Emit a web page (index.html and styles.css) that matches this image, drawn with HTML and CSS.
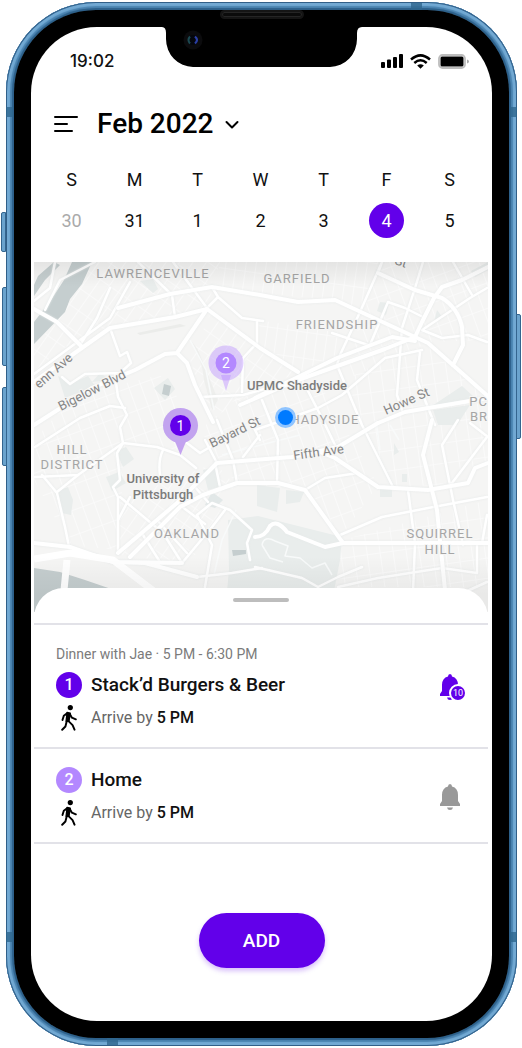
FILE: index.html
```html
<!DOCTYPE html>
<html lang="en">
<head>
<meta charset="utf-8">
<meta name="viewport" content="width=device-width, initial-scale=1">
<title>Feb 2022</title>
<link rel="stylesheet" href="styles.css">
</head>
<body>
<div class="phone">
  <span class="key key-mute"></span>
  <span class="key key-up"></span>
  <span class="key key-down"></span>
  <span class="key key-power"></span>
  <span class="seam seam-top"></span>
  <span class="seam seam-bottom"></span>
  <span class="seam seam-side seam-high"></span>
  <span class="seam seam-side seam-low"></span>
  <div class="bezel">
    <span class="speaker"></span>
    <main class="screen">
      <svg class="notch" viewBox="0 0 200 40" aria-hidden="true">
        <path d="M0 0Q4 0 4 6V12A27 28 0 0 0 31 40H168A27 28 0 0 0 195 12V6Q195 0 200 0Z" fill="#000"/>
        <circle cx="31" cy="13" r="9.500" fill="#0b0b0d"/>
        <circle cx="31" cy="13" r="5" fill="#04060c"/>
        <path d="M28 9.500q-3 3.500 0 7" stroke="#1c4a52" stroke-width="2" fill="none"/>
        <path d="M33 9.500q4 3.500 0 7" stroke="#2b3fa5" stroke-width="2.200" fill="none"/>
      </svg>
      <div class="status">
        <time class="clock">19:02</time>
        <div class="indicators">
          <svg width="22" height="14" viewBox="0 0 22 14" aria-hidden="true">
            <rect x="0" y="8" width="4" height="6" rx="1"/><rect x="6" y="5.500" width="4" height="8.500" rx="1"/><rect x="12" y="3" width="4" height="11" rx="1"/><rect x="18" y="0" width="4" height="14" rx="1"/>
          </svg>
          <svg width="21" height="15" viewBox="0 0 21 15" fill="none" stroke="#000" stroke-width="2.500" aria-hidden="true">
            <path d="M1 5.500Q10.500-2.800 20 5.500M4.300 9Q10.500 3.600 16.700 9"/><path d="M10.500 14.800L7.200 11.500Q10.500 8.800 13.800 11.500Z" fill="#000" stroke="none"/>
          </svg>
          <svg width="31" height="15" viewBox="0 0 31 15" aria-hidden="true">
            <rect x="1" y="1" width="26" height="13" rx="3.500" fill="#fff" stroke="#bdbdbd" stroke-width="1.800"/><rect x="2.500" y="2.500" width="23" height="10" rx="1.500"/><path d="M29 5.500q2 .5 2 2t-2 2z" fill="#aaa"/>
          </svg>
        </div>
      </div>
      <header class="header">
        <button class="icon-button" aria-label="Menu">
          <svg width="24" height="18" viewBox="0 0 24 18" stroke="#000" stroke-width="2" stroke-linecap="round" aria-hidden="true"><path d="M1 2H23M1 9H13M1 16H18"/></svg>
        </button>
        <button class="month"><span>Feb 2022</span>
          <svg width="14" height="9" viewBox="0 0 14 9" fill="none" stroke="#000" stroke-width="2" stroke-linecap="round" stroke-linejoin="round" aria-hidden="true"><path d="M1.500 2L7 7.500L12.500 2"/></svg>
        </button>
      </header>
      <section class="week" aria-label="Week">
        <span class="weekday">S</span><span class="weekday">M</span><span class="weekday">T</span><span class="weekday">W</span><span class="weekday">T</span><span class="weekday">F</span><span class="weekday">S</span>
        <button class="day day-other">30</button><button class="day">31</button><button class="day">1</button><button class="day">2</button><button class="day">3</button><button class="day day-selected" aria-current="date">4</button><button class="day">5</button>
      </section>
      <svg class="map" viewBox="34 262 454 350" preserveAspectRatio="xMidYMin slice">
        <defs>
          <pattern id="gridA" width="11" height="19" patternUnits="userSpaceOnUse" patternTransform="rotate(35)"><path d="M0 0H11M0 0V19" stroke="#fbfbfb" stroke-width="1.600"/></pattern>
          <pattern id="gridB" width="12" height="24" patternUnits="userSpaceOnUse" patternTransform="rotate(-20)"><path d="M0 0H12M0 0V24" stroke="#fbfbfb" stroke-width="1.600"/></pattern>
          <pattern id="gridC" width="13" height="20" patternUnits="userSpaceOnUse" patternTransform="rotate(-8)"><path d="M0 0H13M0 0V20" stroke="#fbfbfb" stroke-width="1.600"/></pattern>
          <pattern id="gridD" width="10" height="26" patternUnits="userSpaceOnUse" patternTransform="rotate(8)"><path d="M0 0H10M0 0V26" stroke="#fbfbfb" stroke-width="1.600"/></pattern>
          <linearGradient id="shade" x1="0" y1="0" x2="0" y2="1"><stop offset="0" stop-color="#000" stop-opacity=".07"/><stop offset=".07" stop-color="#000" stop-opacity="0"/><stop offset=".84" stop-color="#000" stop-opacity="0"/><stop offset=".95" stop-color="#000" stop-opacity=".05"/></linearGradient>
        </defs>
        <rect x="34" y="262" width="454" height="350" fill="#f5f5f4"/>
        <path d="M94 262H220L207 308L110 327L60 350L34 372V350Z" fill="url(#gridA)"/>
        <path d="M212 310L260 348L298 372L250 395L210 420L190 360Z" fill="url(#gridA)"/>
        <path d="M220 262H378L360 312L335 300L255 293L215 287ZM258 320L340 333L340 355L298 372L258 345Z" fill="url(#gridD)"/>
        <path d="M380 262H488V340L430 342L345 380L362 312Z" fill="url(#gridB)"/>
        <path d="M345 380L400 352L430 345L488 400V460L440 485L393 487L362 425Z" fill="url(#gridC)"/>
        <path d="M240 395L318 380L378 485L340 538L305 490L235 483L200 430Z" fill="url(#gridB)"/>
        <path d="M34 440L75 395L160 375L180 400L183 450L125 445L118 550L70 545L34 480Z" fill="url(#gridB)"/>
        <path d="M120 500L215 463L235 485L195 555L182 563L120 555Z" fill="url(#gridA)"/>
        <path d="M343 540L488 500V587H325Z" fill="url(#gridC)"/>
        <g fill="#e9edec">
          <path d="M228 520L258 516L342 537L340 560L330 612H225L229 570Z"/>
          <path d="M58 376L72 383L88 376L95 386L65 398Z"/><path d="M55 492L68 487L73 500L71 515L61 513Z"/>
          <path d="M257 485L280 488L277 512L257 506ZM286 490L304 492L300 502L286 504Z"/>
          <path d="M462 386L475 398L432 406Z"/><path d="M433 410L470 405L457 425L438 425Z"/>
          <path d="M471 271L488 262V270L475 277ZM380 302L389 303L386 315L377 311ZM437 310L443 318L434 322Z"/>
          <path d="M140 281L153 279L158 289L153 293ZM154 388L168 378L175 389L165 400Z"/>
          <path d="M203 470L215 467L219 487L208 490ZM116 451L126 447L134 459L123 467ZM106 477L119 472L126 483L112 491Z"/>
          <path d="M380 489H392V497H380ZM402 474H407V482H402ZM394 443L399 452L394 455ZM100 373L110 380L92 382Z"/>
        </g>
        <path d="M187 335Q202 355 204 380L212 410L218 400L198 350Z" fill="#eeefed"/>
        <path d="M137 333L180 324L186 326L140 335Z" fill="#ebecea"/>
        <path d="M212 492L223 500L215 508L205 505Z" fill="#e2e8e8"/>
        <g fill="#c5cecf">
          <path d="M72 262H92L82 284L70 299L65 312L34 344V322L51 300L64 280Z"/>
          <path d="M34 296L45 280L60 265L54 262L38 276L34 285Z"/>
          <path d="M34 568L60 572L85 580L120 592V612H34Z"/>
          <path d="M164 384L171 386L169 396L162 394ZM232 550L246 550V554L233 556Z"/>
        </g>
        <g fill="none" stroke="#f8fafa" stroke-width="1.500" stroke-linejoin="round">
          <path d="M262 545Q264 535 275 541L288 546L285 556L300 558L312 568L325 563L332 575M262 545L270 558L283 562"/>
          <path d="M214 410L206 370L190 340M222 455L300 435M214 575L222 540L236 510M380 450L376 420M399 440L390 425"/>
        </g>
        <g class="minor">
          <path d="M110 288L97 318L80 345M130 282L110 318L34 374M138 262L172 295L175 317M173 262L207 308M95 262L60 280L45 310M34 301L50 288L55 262"/>
          <path d="M207 308L218 297L212 287M218 297L242 318L263 321M257 321V343L243 358L242 392"/>
          <path d="M110 328L120 356L127 352L131 363L120 373L85 374L70 384L62 377M115 375L118 397L127 415L120 427L123 443"/>
          <path d="M35 447L80 418L110 406L125 408M42 475L57 493L65 527L69 547M35 477L78 475L123 443L157 447L180 455L196 468"/>
          <path d="M118 553V497L113 487L120 480L117 453L123 443M120 497L163 533L182 563M143 535L160 562M157 520L187 553M182 563L212 527L225 510M205 587L212 545L197 515"/>
          <path d="M163 450Q158 460 160 475M78 475L57 492M195 487L208 502M215 463L220 487M217 420L233 460L237 483M260 435L243 457M183 440L200 453L225 438M205 440L217 463M200 397L243 395L268 388M262 400L278 440L277 483"/>
          <path d="M197 577L232 573L262 568M197 515L212 503L230 510L252 530L247 543L250 560M177 503L205 524M130 497L118 520"/>
          <path d="M382 262L360 312L340 355L337 365L362 425L393 487M388 302L405 308L423 317M388 302L370 345M332 333L368 345M378 273L382 262"/>
          <path d="M423 262L415 288L402 328L397 395L403 413M453 262L472 295M487 288L470 298L422 330L442 338L468 335L487 342"/>
          <path d="M422 350L385 358L342 395L318 408L255 430M420 352L417 380L435 425M298 372L322 418L335 445M260 440L250 420"/>
          <path d="M305 490L325 478L358 473M408 490L415 543L413 592M487 437L452 483M458 420L442 445L453 500L463 545M470 423L488 437"/>
          <path d="M340 535L382 517L428 508L487 497M338 587L378 578L442 568L477 573L477 543M487 582L465 592M255 567L302 578L318 587L338 577L362 567M487 515L482 543"/>
        </g>
        <g class="major">
          <path d="M34 309L57 322L82 347M34 382L110 328L175 317L207 309L260 348L298 372M118 308L170 294L212 287L260 295L298 302L335 300L415 337L428 343L490 398"/>
          <path d="M207 309L177 353L165 354L135 370L92 388L34 425M177 353L187 363L195 385L213 422"/>
          <path d="M378 273L415 290L442 298Q458 308 462 327L463 345L453 365M488 267L462 280L442 287L434 298L422 322L415 337L385 349L298 380L240 405"/>
          <path d="M255 398L337 358L392 337L415 341M378 423L405 412L428 408L488 398"/>
          <path d="M432 420L423 455L437 510L445 590"/>
          <path d="M118 553L177 503L217 463L292 457L338 447L378 423M130 557L180 507L203 495L237 483L278 483L305 490L343 543"/>
          <path d="M320 452L335 458L378 487L428 490L468 483L475 468L488 463"/>
          <path d="M255 537Q265 537 270 526Q277 519 287 532L325 547L343 543H488"/>
          <path d="M34 543L70 547L113 562L182 563M113 562L145 563L197 577"/>
        </g>
        <path d="M34 559L70 553L113 560L155 592M67 560L63 600" fill="none" stroke="#fff" stroke-width="7"/>
        <g class="area">
          <text x="153" y="278">LAWRENCEVILLE</text><text x="297" y="283">GARFIELD</text><text x="337" y="329">FRIENDSHIP</text>
          <text x="72" y="454">HILL</text><text x="72" y="469">DISTRICT</text><text x="187" y="538">OAKLAND</text><text x="325" y="424">HADYSIDE</text>
          <text x="440" y="538">SQUIRREL</text><text x="440" y="554">HILL</text><text class="edge" x="488" y="406">PC</text><text class="edge" x="488" y="421">BR</text>
        </g>
        <g class="street">
          <text transform="translate(39 389) rotate(-41)">enn Ave</text>
          <text transform="translate(61 411) rotate(-27)">Bigelow Blvd</text>
          <text transform="translate(212 448) rotate(-26)">Bayard St</text>
          <text transform="translate(386 415) rotate(-24)">Howe St</text>
          <text transform="translate(294 460) rotate(-8)">Fifth Ave</text>
          <text transform="translate(394 264) rotate(18)">St</text>
        </g>
        <g class="place">
          <text x="297" y="390">UPMC Shadyside</text><text x="163" y="483">University of</text><text x="163" y="499">Pittsburgh</text>
        </g>
        <rect x="34" y="262" width="454" height="350" fill="url(#shade)"/>
        <path d="M221 375L226 391L231 375Z" fill="#dcc8fa"/><circle cx="226" cy="363" r="17.500" fill="#b388ff" fill-opacity=".4"/><circle cx="226" cy="363" r="10.500" fill="#b388ff"/>
        <path d="M174 439L180.500 455L187 439Z" fill="#c3a2ef"/><circle cx="180.500" cy="425.500" r="17.500" fill="#c2a3ef"/><circle cx="180.500" cy="425.500" r="10.500" fill="#6200ea"/>
        <text class="pin" x="226" y="368">2</text><text class="pin" x="180.500" y="430.500">1</text>
        <circle cx="285.500" cy="417.500" r="10.500" fill="#8fc4ff"/><circle cx="285.500" cy="417.500" r="7.500" fill="#007aff"/>
      </svg>
      <section class="sheet">
        <div class="grip"><span class="handle"></span></div>
        <ul class="stops">
          <li class="stop">
            <div class="details">
              <p class="meta">Dinner with Jae · 5 PM - 6:30 PM</p>
              <div class="line"><span class="number">1</span><h2 class="title">Stack’d Burgers &amp; Beer</h2></div>
              <div class="line">
                <svg class="walk" viewBox="90 372 54 80" aria-hidden="true"><circle cx="121" cy="380" r="8"/><path class="torso" d="M111 395L121 397L117 422L108 422Z"/><path d="M112 397L101 405L97 418M119 399L126 411L138 416M114 420L128 434L134 448M110 422L106 438L96 448"/></svg>
                <p class="arrive">Arrive by <strong>5 PM</strong></p>
              </div>
            </div>
            <button class="bell bell-on" aria-label="Reminder, 10 minutes">
              <svg viewBox="0 0 24 28" aria-hidden="true"><path d="M12 1Q14 1 14 3.500Q20 5 20 12V18L22 21V23H2V21L4 18V12Q4 5 10 3.500Q10 1 12 1ZM9 24.500H15Q14.500 27 12 27T9 24.500Z"/></svg>
              <span class="count">10</span>
            </button>
          </li>
          <li class="stop">
            <div class="details">
              <div class="line"><span class="number number-next">2</span><h2 class="title">Home</h2></div>
              <div class="line">
                <svg class="walk" viewBox="90 372 54 80" aria-hidden="true"><circle cx="121" cy="380" r="8"/><path class="torso" d="M111 395L121 397L117 422L108 422Z"/><path d="M112 397L101 405L97 418M119 399L126 411L138 416M114 420L128 434L134 448M110 422L106 438L96 448"/></svg>
                <p class="arrive">Arrive by <strong>5 PM</strong></p>
              </div>
            </div>
            <button class="bell" aria-label="Reminder off">
              <svg viewBox="0 0 24 28" aria-hidden="true"><path d="M12 1Q14 1 14 3.500Q20 5 20 12V18L22 21V23H2V21L4 18V12Q4 5 10 3.500Q10 1 12 1ZM9 24.500H15Q14.500 27 12 27T9 24.500Z"/></svg>
            </button>
          </li>
        </ul>
      </section>
      <div class="actions"><button class="add">ADD</button></div>
    </main>
  </div>
</div>
</body>
</html>
```
FILE: styles.css
```css
* { box-sizing: border-box; }
body { margin: 0; background: #fff; font-family: Roboto, "Liberation Sans", sans-serif; color: #111; }
button { border: 0; padding: 0; background: none; font: inherit; color: inherit; cursor: pointer; }
p, h2, ul { margin: 0; padding: 0; list-style: none; }

/* Device frame */
.phone {
  position: relative;
  margin: 2px 5px 2px 6px;
  padding: 8px;
  border-radius: 90px;
  background: #4a86b4;
  box-shadow: inset 0 0 0 1px #315f88, inset 0 0 1px 4px #72a9d3, inset 0 0 1px 6px #4c85b2, inset 0 0 0 8px #2d608a;
}
.bezel { position: relative; padding: 17px; border-radius: 82px; background: #000; }
.screen { position: relative; display: flex; flex-direction: column; border-radius: 66px; background: #fff; overflow: hidden; }
.key { position: absolute; left: -5px; width: 5px; border: 1px solid #34658f; border-radius: 2px 0 0 2px; background: #6ba3cd; }
.key-mute { top: 210px; height: 40px; }
.key-up { top: 285px; height: 79px; left: -4px; }
.key-down { top: 385px; height: 79px; left: -4px; }
.key-power { top: 312px; height: 125px; left: auto; right: -4px; border-radius: 0 2px 2px 0; }
.seam { position: absolute; width: 11px; height: 7px; background: #2f678f; opacity: .8; }
.seam-top { top: 1px; right: 95px; }
.seam-bottom { bottom: 1px; left: 101px; }
.seam-side { left: 0; right: 0; width: auto; height: 10px; background: none; border: solid #2f678f; border-width: 0 7px; }
.seam-high { top: 105px; }
.seam-low { bottom: 104px; }
.speaker { position: absolute; top: 0; left: 50%; width: 84px; height: 9px; margin-left: -42px; border: 2px solid #151515; border-radius: 5px; background: #0b0b0b; box-shadow: inset 0 0 0 1px #252525; }
.notch { position: absolute; top: 0; left: 50%; width: 200px; height: 40px; margin-left: -100px; }

/* Status and month */
.status { display: flex; align-items: center; justify-content: space-between; height: 68px; padding: 0 23px 0 39px; }
.clock { font: 500 17px/20px Inter, sans-serif; }
.indicators { display: flex; align-items: center; gap: 7px; }
.header { display: flex; align-items: center; gap: 19px; height: 58px; padding: 0 23px; }
.icon-button, .month { display: flex; align-items: center; }
.month { gap: 12px; font-size: 28px; font-weight: 500; line-height: 36px; color: #000; }

/* Week strip */
.week { display: grid; grid-template-columns: repeat(7, 1fr); justify-items: center; row-gap: 8px; padding: 12px 11px 24px 9px; font-size: 18px; }
.weekday { line-height: 30px; }
.day { width: 35px; height: 35px; border-radius: 50%; line-height: 35px; }
.day-other { color: #aaa; }
.day-selected { background: #6200ea; color: #fff; }

/* Map */
.map { display: block; margin: 0 4px 0 3px; height: 350px; }
.minor, .major { fill: none; stroke: #fff; stroke-linejoin: round; stroke-linecap: round; filter: drop-shadow(0 0 1px #e6e9e9); }
.minor { stroke-width: 2.5; }
.major { stroke-width: 4; }
.map text { font-size: 13px; text-anchor: middle; paint-order: stroke; stroke: #f6f6f5; stroke-width: 2px; }
.map .area text { fill: #a5a5a5; letter-spacing: 1px; }
.map .area .edge { text-anchor: end; }
.map .street text { fill: #858585; text-anchor: start; }
.map .place text { fill: #7c7c7c; font-weight: 500; }
.map .pin { fill: #fff; font-size: 14px; stroke: none; }

/* Stop list */
.sheet { position: relative; margin: -24px 4px 0 3px; border-radius: 30px 30px 0 0; background: #fff; }
.grip { display: flex; justify-content: center; height: 35px; padding-top: 10px; }
.handle { width: 56px; height: 4px; border-radius: 2px; background: #bdbdbd; }
.stops { border-bottom: 2px solid #e2e2e8; }
.stop { display: flex; align-items: center; justify-content: space-between; padding: 18px 26px 16px 22px; border-top: 2px solid #e2e2e8; }
.details { display: flex; flex-direction: column; gap: 7px; }
.meta { font-size: 14px; line-height: 22px; color: #7b7b7b; }
.line { display: flex; align-items: center; gap: 9px; height: 26px; }
.number { width: 26px; height: 26px; border-radius: 50%; background: #6200ea; color: #fff; font-size: 16px; font-weight: 500; line-height: 26px; text-align: center; }
.number-next { background: #b388ff; }
.title { font-size: 19px; font-weight: 500; line-height: 26px; }
.walk { width: 26px; height: 26px; stroke: #000; stroke-width: 6; stroke-linecap: round; stroke-linejoin: round; }
.walk circle { stroke: none; }
.walk path { fill: none; }
.walk .torso { fill: #000; stroke-width: 4; }
.arrive { font-size: 16px; line-height: 26px; color: #666; }
.arrive strong { font-weight: 500; color: #111; }
.bell { position: relative; width: 24px; height: 28px; fill: #999; }
.bell svg { display: block; }
.bell-on { fill: #6200ea; }
.count { position: absolute; right: -5px; bottom: -1px; width: 18px; height: 18px; border: 2px solid #fff; border-radius: 50%; background: #6200ea; color: #fff; font-size: 9px; line-height: 14px; text-align: center; }

.actions { display: flex; justify-content: center; padding: 69px 0 53px; }
.add { width: 126px; height: 55px; border-radius: 28px; background: #6200ea; color: #fff; font-size: 19px; font-weight: 500; box-shadow: 0 3px 5px rgba(98, 0, 234, .25); }
```
